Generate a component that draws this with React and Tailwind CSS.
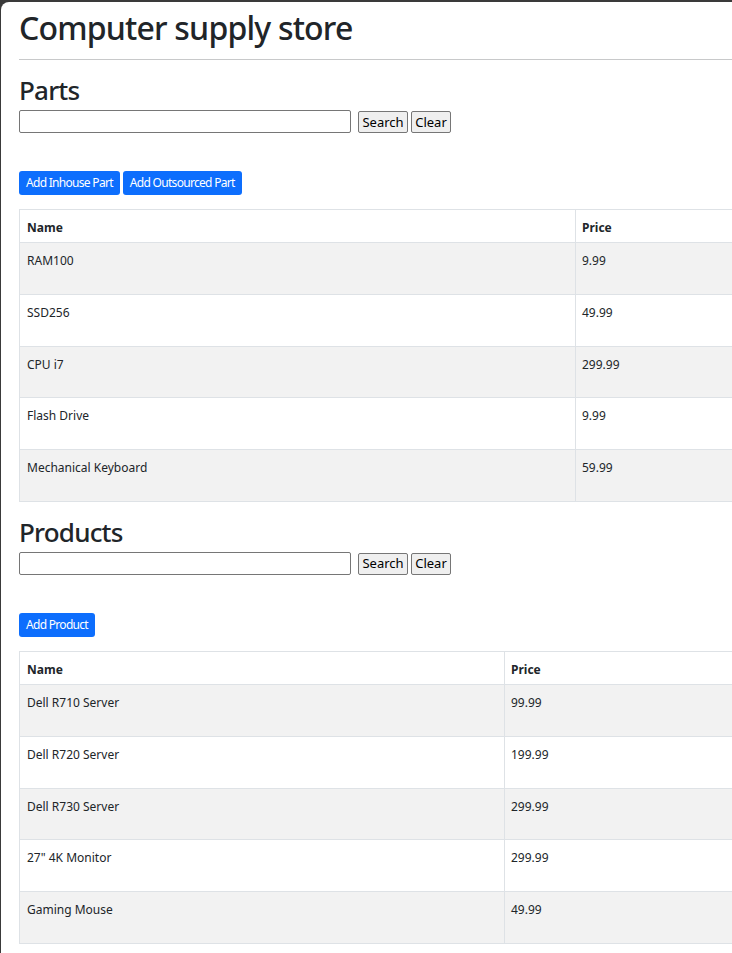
import React from 'react';

const parts = [
  ['RAM100', '9.99'],
  ['SSD256', '49.99'],
  ['CPU i7', '299.99'],
  ['Flash Drive', '9.99'],
  ['Mechanical Keyboard', '59.99'],
];

const products = [
  ['Dell R710 Server', '99.99'],
  ['Dell R720 Server', '199.99'],
  ['Dell R730 Server', '299.99'],
  ['27" 4K Monitor', '299.99'],
  ['Gaming Mouse', '49.99'],
];

function SearchRow() {
  return (
    <div className="flex items-start h-[23px]">
      <input
        type="text"
        className="w-[332px] h-[23px] border border-[#767676] rounded-[2px] bg-white px-1 text-[13px]"
      />
      <button className="ml-[7px] mt-[1px] h-[22px] w-[50px] border border-[#767676] rounded-[2px] bg-[#efefef] text-[13px] leading-none text-black">
        Search
      </button>
      <button className="ml-[3px] mt-[1px] h-[22px] w-[40px] border border-[#767676] rounded-[2px] bg-[#efefef] text-[13px] leading-none text-black">
        Clear
      </button>
    </div>
  );
}

function DataTable({ rows, nameWidth }) {
  return (
    <table className="mt-[14px] w-[900px] border-collapse text-[12px] table-fixed">
      <colgroup>
        <col style={{ width: nameWidth }} />
        <col />
      </colgroup>
      <thead>
        <tr className="h-[33px]">
          <th className="border border-[#dee2e6] px-[7px] pt-[4px] text-left align-middle font-bold">Name</th>
          <th className="border border-[#dee2e6] px-[6px] pt-[4px] text-left align-middle font-bold">Price</th>
        </tr>
      </thead>
      <tbody>
        {rows.map(([name, price], i) => (
          <tr key={name} className={`h-[51.8px] ${i % 2 === 0 ? 'bg-[#f2f2f2]' : 'bg-white'}`}>
            <td className="border border-[#dee2e6] px-[7px] pt-[9px] align-top">{name}</td>
            <td className="border border-[#dee2e6] px-[6px] pt-[9px] align-top">{price}</td>
          </tr>
        ))}
      </tbody>
    </table>
  );
}

function Section({ title, buttons, rows, nameWidth }) {
  return (
    <section>
      <h2 className="text-[26px] leading-[28px] h-[34px] font-medium tracking-[-0.8px]">{title}</h2>
      <SearchRow />
      <div className="mt-[38px] flex gap-[3px]">
        {buttons.map((b) => (
          <button
            key={b}
            className="h-[24px] px-[7px] rounded-[3px] bg-[#0d6efd] text-white text-[12px] leading-none tracking-[-0.7px]"
          >
            {b}
          </button>
        ))}
      </div>
      <DataTable rows={rows} nameWidth={nameWidth} />
    </section>
  );
}

export default function App() {
  return (
    <div className="w-[732px] h-[953px] bg-[#3a3a3a] overflow-hidden" style={{ fontFamily: '"Noto Sans", "Open Sans", sans-serif' }}>
      <div className="mt-[2px] ml-[1px] h-[951px] bg-white rounded-tl-[8px] overflow-hidden text-[#212529]">
        <div className="pl-[18px]">
          <h1 className="text-[32px] leading-[36px] h-[41px] pt-[8px] box-border font-medium tracking-[-0.8px]">
            Computer supply store
          </h1>
          <hr className="mt-[16px] border-0 h-px bg-[#c8c9ca]" />
          <div className="mt-[16px]">
            <Section
              title="Parts"
              buttons={['Add Inhouse Part', 'Add Outsourced Part']}
              rows={parts}
              nameWidth="556px"
            />
          </div>
          <div className="mt-[16px]">
            <Section title="Products" buttons={['Add Product']} rows={products} nameWidth="485px" />
          </div>
        </div>
      </div>
    </div>
  );
}
